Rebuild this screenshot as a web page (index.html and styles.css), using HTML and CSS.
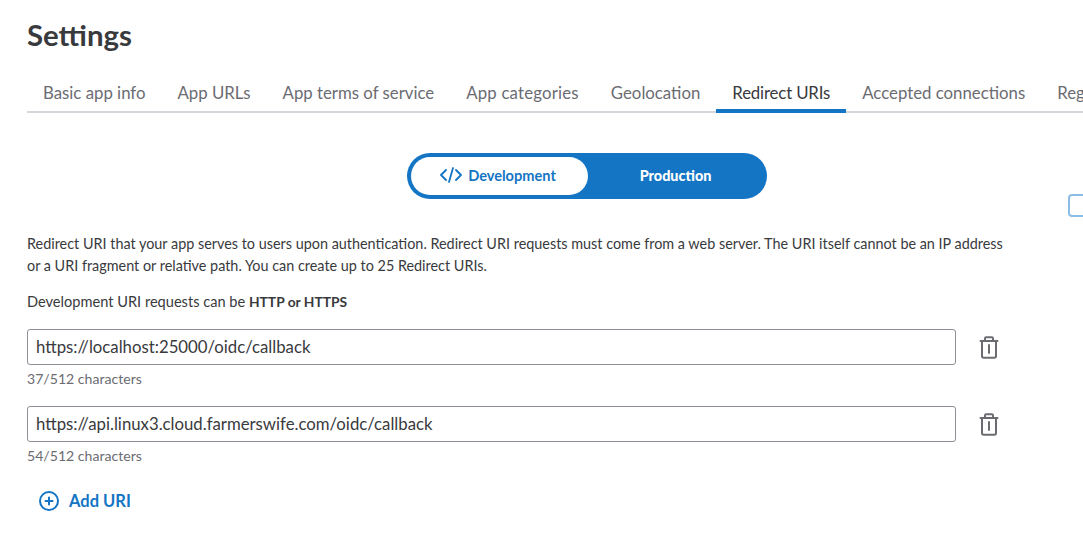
FILE: index.html
```html
<!DOCTYPE html>
<html lang="en">
<head>
<meta charset="utf-8">
<title>Settings</title>
<link rel="stylesheet" href="styles.css">
</head>
<body>
<main class="page">
  <h1 class="title">Settings</h1>
  <nav class="tabs">
    <a class="tab">Basic app info</a>
    <a class="tab">App URLs</a>
    <a class="tab">App terms of service</a>
    <a class="tab tab-wide">App categories</a>
    <a class="tab">Geolocation</a>
    <a class="tab tab-narrow active">Redirect URIs</a>
    <a class="tab">Accepted connections</a>
    <a class="tab">Registration</a>
  </nav>
  <div class="toggle-row">
    <div class="toggle">
      <div class="seg seg-on">
        <svg class="code-icon" width="22" height="16" viewBox="0 0 22 16" fill="none" stroke="currentColor" stroke-width="1.8" stroke-linecap="round" stroke-linejoin="round"><path d="M6 3 1 8l5 5M16 3l5 5-5 5M13 1 9 15"/></svg>
        <span>Development</span>
      </div>
      <div class="seg seg-off">Production</div>
    </div>
  </div>
  <span class="floating-box"></span>
  <p class="desc">Redirect URI that your app serves to users upon authentication. Redirect URI requests must come from a web server. The URI itself cannot be an IP address or a URI fragment or relative path. You can create up to 25 Redirect URIs.</p>
  <p class="note">Development URI requests can be <strong>HTTP or HTTPS</strong></p>
  <div class="uri">
    <div class="uri-row">
      <div class="input">https://localhost:25000/oidc/callback</div>
      <svg class="trash" width="20" height="23" viewBox="0 0 20 23" fill="none" stroke="currentColor" stroke-width="2" stroke-linecap="round" stroke-linejoin="round"><path d="M1.500 5h17M6 5V2.500q0-1.200 1.200-1.200h5.600q1.200 0 1.200 1.200V5M3 5v15q0 1.700 1.700 1.700h10.600q1.700 0 1.700-1.700V5M10 9v8"/></svg>
    </div>
    <div class="count">37/512 characters</div>
  </div>
  <div class="uri">
    <div class="uri-row">
      <div class="input">https://api.linux3.cloud.farmerswife.com/oidc/callback</div>
      <svg class="trash" width="20" height="23" viewBox="0 0 20 23" fill="none" stroke="currentColor" stroke-width="2" stroke-linecap="round" stroke-linejoin="round"><path d="M1.500 5h17M6 5V2.500q0-1.200 1.200-1.200h5.600q1.200 0 1.200 1.200V5M3 5v15q0 1.700 1.700 1.700h10.600q1.700 0 1.700-1.700V5M10 9v8"/></svg>
    </div>
    <div class="count">54/512 characters</div>
  </div>
  <a class="add">
    <svg width="20" height="20" viewBox="0 0 20 20" fill="none" stroke="currentColor" stroke-width="2" stroke-linecap="round"><circle cx="10" cy="10" r="9"/><path d="M10 6.500v7M6.500 10h7"/></svg>
    <span>Add URI</span>
  </a>
</main>
</body>
</html>
```
FILE: styles.css
```css
* { box-sizing: border-box; }
html, body { margin: 0; height: 100%; overflow: hidden; background: #fff; }
body { font-family: Lato, "Open Sans", sans-serif; color: #414750; }
.page { position: relative; width: 1083px; height: 535px; padding: 17px 0 0 27px; overflow: hidden; }
.title { margin: 0; font-size: 29.400px; line-height: 36px; font-weight: 700; color: #393a3d; }
.tabs { display: flex; margin-top: 21px; height: 39px; width: 1056px; box-shadow: inset 0 -2px 0 #d4d7dc; overflow: hidden; }
.tab { flex: none; padding: 0 16px; height: 39px; line-height: 38px; font-size: 16.800px; color: #6b6c72; }
.tab-wide { letter-spacing: 0.2px; }
.tab-narrow { letter-spacing: -0.15px; }
.tab.active { color: #393a3d; border-bottom: 4px solid #1475c4; }
.toggle-row { display: flex; margin-top: 40px; padding-left: 380px; }
.toggle { display: flex; width: 360px; height: 46px; padding: 4px; border-radius: 23px; background: #1475c4; }
.seg { display: flex; align-items: center; justify-content: center; height: 36px; font-weight: 700; }
.seg-on { width: 177px; height: 38px; padding: 0 0 2px; gap: 6px; margin-right: 0; background: #fff; border-radius: 19px; color: #1475c4; font-size: 14.600px; }
.seg-on .code-icon { margin-left: -3px; }
.seg-off { flex: 1; color: #fff; font-size: 14.400px; font-weight: 900; }
.floating-box { position: absolute; left: 1068px; top: 194px; width: 40px; height: 23px; border: 2px solid #8cbde6; border-radius: 4px; }
.desc { margin: 34px 0 0; width: 985px; font-size: 14.400px; line-height: 22px; color: #393a3d; }
.note { margin: 14px 0 0; font-size: 14.600px; line-height: 22px; color: #393a3d; }
.note strong { font-size: 13.800px; font-weight: 700; }
.uri { margin-top: 16px; }
.uri + .uri { margin-top: 18px; }
.uri-row { display: flex; align-items: center; gap: 23px; }
.input { width: 929px; height: 36px; padding: 0 8px; line-height: 34px; border: 1px solid #8d9096; border-radius: 3px; font-size: 16.750px; color: #393a3d; }
.trash { color: #6b6c72; }
.count { margin-top: 5px; font-size: 14.100px; line-height: 18px; color: #6b6c72; }
.add { display: flex; align-items: center; gap: 10px; margin: 26px 0 0 12px; font-size: 16.500px; font-weight: 700; line-height: 20px; color: #1475c4; }
```
